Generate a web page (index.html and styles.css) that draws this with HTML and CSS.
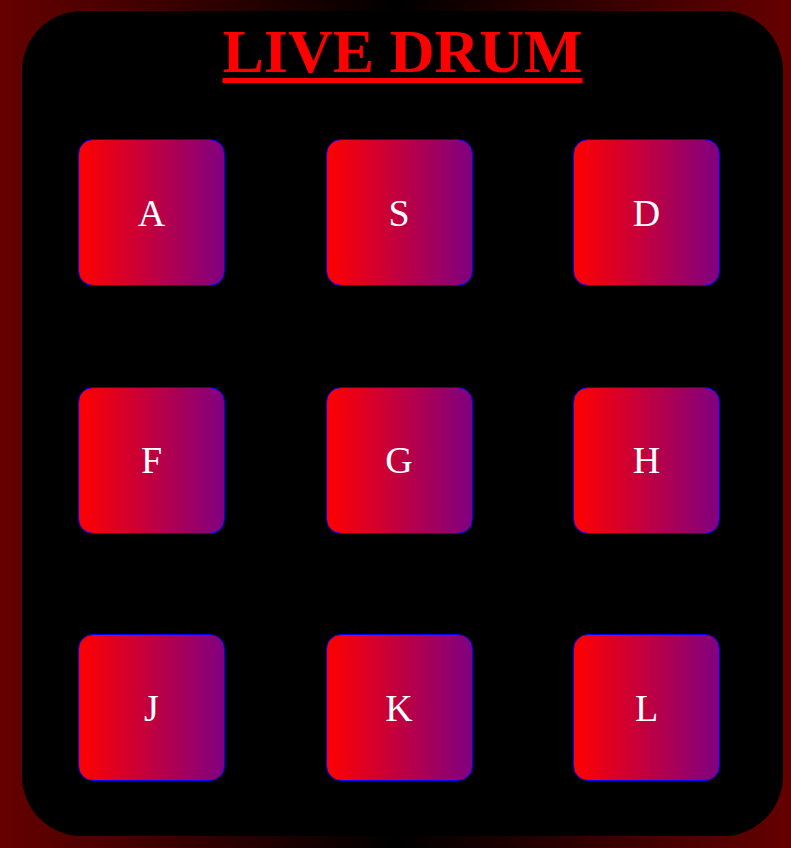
FILE: index.html
```html
<!DOCTYPE html>
<html>
<head>
<meta charset="utf-8">
<title>Live Drum</title>
<link rel="stylesheet" href="styles.css">
</head>
<body>
  <div class="drum-kit">
    <h1 class="title">LIVE DRUM</h1>
    <div class="pads">
      <div class="pad">A</div>
      <div class="pad">S</div>
      <div class="pad">D</div>
      <div class="pad">F</div>
      <div class="pad">G</div>
      <div class="pad">H</div>
      <div class="pad">J</div>
      <div class="pad">K</div>
      <div class="pad">L</div>
    </div>
  </div>
</body>
</html>
```

FILE: styles.css
```css
html, body {
  margin: 0;
  padding: 0;
}

body {
  width: 791px;
  height: 848px;
  overflow: hidden;
  background: linear-gradient(to right, #660000, #000000, #660000);
  font-family: "Liberation Serif", "Times New Roman", serif;
}

.drum-kit {
  box-sizing: border-box;
  width: 761px;
  margin: 11px 8px 13px 22px;
  padding: 9px 0 55px 56px;
  background: #000;
  border-radius: 60px;
}

.title {
  margin: 0 0 57px -56px;
  font-size: 62px;
  line-height: 62px;
  font-weight: bold;
  color: #ff0000;
  text-align: center;
  text-decoration: underline;
  text-decoration-thickness: 5px;
  text-underline-offset: 6px;
}

.pads {
  display: grid;
  grid-template-columns: repeat(3, 147px);
  grid-auto-rows: 147px;
  gap: 100.5px;
}

.pad {
  box-sizing: border-box;
  display: flex;
  align-items: center;
  justify-content: center;
  border: 1px solid #0000ff;
  border-radius: 15px;
  background: linear-gradient(to right, #ff0000, #800080);
  color: #fff;
  font-size: 38px;
}
```
